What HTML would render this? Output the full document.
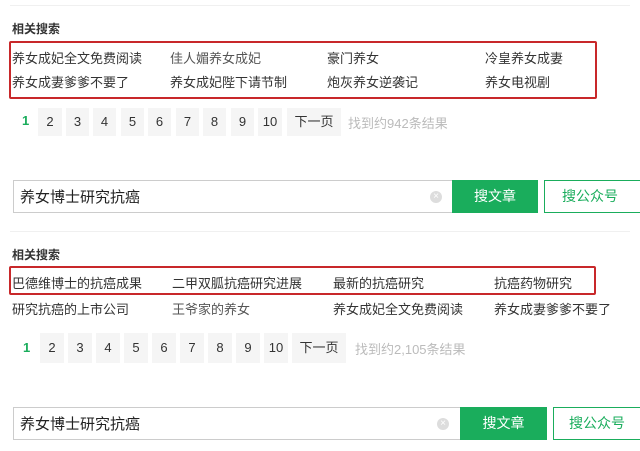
<!DOCTYPE html><html><head><meta charset="utf-8"><style>
body{margin:0;width:640px;height:451px;background:#fff;position:relative;overflow:hidden;font-family:"Liberation Sans","Noto Sans CJK SC",sans-serif;}
.a{position:absolute;white-space:nowrap}
.h{font-size:12px;font-weight:bold;color:#333}
.l{font-size:13px;color:#333}
.g{color:#555}
.rb{position:absolute;border:2px solid #c8282a;border-radius:2px}
.pg{position:absolute;background:#f5f5f5;color:#333;font-size:13px;text-align:center}
.cnt{font-size:13px;color:#bbb}
.sb{position:absolute;border:1px solid #ccc;background:#fff;box-sizing:border-box}
.btn{position:absolute;background:#1aad5c;color:#fff;font-size:14px;text-align:center;box-sizing:border-box}
.btn2{position:absolute;border:1px solid #1aad5c;color:#1aad5c;background:#fff;font-size:14px;text-align:center;box-sizing:border-box}
.x{position:absolute;width:12px;height:12px;border-radius:6px;background:#ddd;color:#fff;font-size:10px;line-height:12px;text-align:center}
.ln{position:absolute;left:10px;right:10px;height:1px;background:#f0f0f0}
</style></head><body>
<div class="ln" style="top:5px"></div>
<div class="a h" style="left:12px;top:20px">相关搜索</div>
<div class="rb" style="left:9px;top:41px;width:584px;height:54px"></div>
<div class="a l" style="left:12px;top:48px">养女成妃全文免费阅读</div>
<div class="a l g" style="left:170px;top:48px">佳人媚养女成妃</div>
<div class="a l" style="left:327px;top:48px">豪门养女</div>
<div class="a l" style="left:485px;top:48px">冷皇养女成妻</div>
<div class="a l" style="left:12px;top:72px">养女成妻爹爹不要了</div>
<div class="a l" style="left:170px;top:72px">养女成妃陛下请节制</div>
<div class="a l" style="left:327px;top:72px">炮灰养女逆袭记</div>
<div class="a l" style="left:485px;top:72px">养女电视剧</div>
<div class="a" style="left:22px;top:113px;font-size:13px;color:#1aad5c;font-weight:bold">1</div>
<div class="pg" style="left:38px;top:108px;width:24px;height:28px;line-height:28px">2</div>
<div class="pg" style="left:66px;top:108px;width:23px;height:28px;line-height:28px">3</div>
<div class="pg" style="left:93px;top:108px;width:23px;height:28px;line-height:28px">4</div>
<div class="pg" style="left:121px;top:108px;width:23px;height:28px;line-height:28px">5</div>
<div class="pg" style="left:148px;top:108px;width:23px;height:28px;line-height:28px">6</div>
<div class="pg" style="left:176px;top:108px;width:23px;height:28px;line-height:28px">7</div>
<div class="pg" style="left:203px;top:108px;width:23px;height:28px;line-height:28px">8</div>
<div class="pg" style="left:231px;top:108px;width:23px;height:28px;line-height:28px">9</div>
<div class="pg" style="left:258px;top:108px;width:24px;height:28px;line-height:28px">10</div>
<div class="pg" style="left:287px;top:108px;width:54px;height:28px;line-height:28px">下一页</div>
<div class="a cnt" style="left:348px;top:113px">找到约942条结果</div>
<div class="sb" style="left:13px;top:180px;width:440px;height:33px"></div>
<div class="a" style="left:20px;top:186px;font-size:15px;color:#222">养女博士研究抗癌</div>
<div class="x" style="left:430px;top:191px">×</div>
<div class="btn" style="left:452px;top:180px;width:86px;height:33px;line-height:33px">搜文章</div>
<div class="btn2" style="left:544px;top:180px;width:100px;height:33px;line-height:31px;padding-right:8px">搜公众号</div>
<div class="ln" style="top:231px"></div>
<div class="a h" style="left:12px;top:246px">相关搜索</div>
<div class="rb" style="left:9px;top:266px;width:583px;height:25px"></div>
<div class="a l" style="left:12px;top:273px">巴德维博士的抗癌成果</div>
<div class="a l" style="left:172px;top:273px">二甲双胍抗癌研究进展</div>
<div class="a l" style="left:333px;top:273px">最新的抗癌研究</div>
<div class="a l" style="left:494px;top:273px">抗癌药物研究</div>
<div class="a l" style="left:12px;top:299px">研究抗癌的上市公司</div>
<div class="a l g" style="left:172px;top:299px">王爷家的养女</div>
<div class="a l" style="left:333px;top:299px">养女成妃全文免费阅读</div>
<div class="a l" style="left:494px;top:299px">养女成妻爹爹不要了</div>
<div class="a" style="left:23px;top:340px;font-size:13px;color:#1aad5c;font-weight:bold">1</div>
<div class="pg" style="left:40px;top:333px;width:24px;height:30px;line-height:30px">2</div>
<div class="pg" style="left:68px;top:333px;width:24px;height:30px;line-height:30px">3</div>
<div class="pg" style="left:96px;top:333px;width:24px;height:30px;line-height:30px">4</div>
<div class="pg" style="left:124px;top:333px;width:24px;height:30px;line-height:30px">5</div>
<div class="pg" style="left:152px;top:333px;width:24px;height:30px;line-height:30px">6</div>
<div class="pg" style="left:180px;top:333px;width:24px;height:30px;line-height:30px">7</div>
<div class="pg" style="left:208px;top:333px;width:24px;height:30px;line-height:30px">8</div>
<div class="pg" style="left:236px;top:333px;width:24px;height:30px;line-height:30px">9</div>
<div class="pg" style="left:264px;top:333px;width:24px;height:30px;line-height:30px">10</div>
<div class="pg" style="left:292px;top:333px;width:54px;height:30px;line-height:30px">下一页</div>
<div class="a cnt" style="left:355px;top:339px">找到约2,105条结果</div>
<div class="sb" style="left:13px;top:407px;width:448px;height:33px"></div>
<div class="a" style="left:20px;top:413px;font-size:15px;color:#222">养女博士研究抗癌</div>
<div class="x" style="left:437px;top:418px">×</div>
<div class="btn" style="left:460px;top:407px;width:87px;height:33px;line-height:33px">搜文章</div>
<div class="btn2" style="left:553px;top:407px;width:92px;height:33px;line-height:31px;padding-right:4px">搜公众号</div>
</body></html>
